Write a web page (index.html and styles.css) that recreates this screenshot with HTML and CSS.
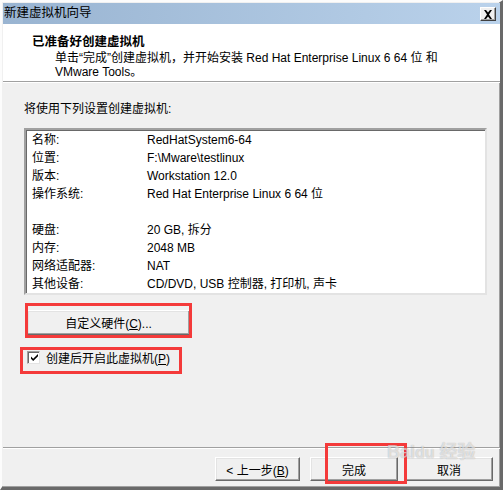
FILE: index.html
```html
<!DOCTYPE html>
<html lang="zh-CN">
<head>
<meta charset="utf-8">
<title>新建虚拟机向导</title>
<link rel="stylesheet" href="styles.css">
</head>
<body>
<div class="window">
  <div class="titlebar">
    <span class="title">新建虚拟机向导</span>
    <span class="close"><svg width="10" height="9" viewBox="0 0 10 9"><path d="M1 0h2l2 2.6L7 0h2L6 4.5 9 9H7L5 6.4 3 9H1l3-4.5z" fill="#000"/></svg></span>
  </div>
  <div class="header">
    <h1>已准备好创建虚拟机</h1>
    <p>单击“完成”创建虚拟机，并开始安装 Red Hat Enterprise Linux 6 64 位 和<br>VMware Tools。</p>
  </div>
  <div class="content">
    <p class="intro">将使用下列设置创建虚拟机:</p>
    <div class="listbox">
      <div class="row"><span class="k">名称:</span><span>RedHatSystem6-64</span></div>
      <div class="row"><span class="k">位置:</span><span>F:\Mware\testlinux</span></div>
      <div class="row"><span class="k">版本:</span><span>Workstation 12.0</span></div>
      <div class="row"><span class="k">操作系统:</span><span>Red Hat Enterprise Linux 6 64 位</span></div>
      <div class="row"></div>
      <div class="row"><span class="k">硬盘:</span><span>20 GB, 拆分</span></div>
      <div class="row"><span class="k">内存:</span><span>2048 MB</span></div>
      <div class="row"><span class="k">网络适配器:</span><span>NAT</span></div>
      <div class="row"><span class="k">其他设备:</span><span>CD/DVD, USB 控制器, 打印机, 声卡</span></div>
    </div>
    <button class="btn hw">自定义硬件(<u>C</u>)...</button>
    <label class="check"><span class="box"><svg width="9" height="9" viewBox="0 0 9 9"><path d="M1 3.5l2.2 2.2L8 1v2.3L3.2 8 1 5.8z" fill="#000"/></svg></span><span class="ctext">创建后开启此虚拟机(<u>P</u>)</span></label>
  </div>
  <div class="footer">
    <button class="btn back">&lt; 上一步(<u>B</u>)</button>
    <button class="btn finish">完成</button>
    <button class="btn cancel">取消</button>
  </div>
  <div class="mark m1"></div>
  <div class="mark m2"></div>
  <div class="mark m3"></div>
  <div class="watermark">Bai<b>du</b> 经验</div>
</div>
</body>
</html>
```

FILE: styles.css
```css
* { box-sizing: border-box; }
html, body { margin: 0; padding: 0; }
body {
  font-family: "Liberation Sans", "Noto Sans CJK SC", sans-serif;
  font-size: 12px;
  color: #000;
  background: #f0f0f0;
}
.window {
  position: relative;
  width: 503px;
  height: 490px;
  background: #f0f0f0;
  border-style: solid;
  border-width: 2px 3px 3px 2px;
  border-color: #fcfcfc #696969 #696969 #fcfcfc;
  box-shadow: inset -1px -1px 0 #a0a0a0;
  padding: 1px 0 0 1px;
  display: flex;
  flex-direction: column;
}
.titlebar {
  height: 21px;
  background: linear-gradient(to right, #99b4d1, #bad2eb);
  display: flex;
  align-items: center;
  justify-content: space-between;
  padding-left: 1px;
}
.title { line-height: 21px; font-size: 12.5px; }
.close {
  width: 16px;
  height: 14px;
  margin-right: 4px;
  margin-top: 1px;
  background: #f0f0f0;
  border: 1px solid;
  border-color: #fff #404040 #404040 #fff;
  box-shadow: inset -1px -1px 0 #a0a0a0;
  display: flex;
  align-items: center;
  justify-content: center;
}
.header {
  height: 58px;
  background: #fff;
  border-bottom: 1px solid #a0a0a0;
  box-shadow: 0 1px 0 #fff;
  padding: 10px 0 0 29px;
}
.header h1 {
  margin: 0;
  font-size: 12.5px;
  font-weight: bold;
  line-height: 16px;
}
.header p {
  margin: 1px 0 0 23px;
  line-height: 14px;
}
.content {
  flex: 1;
  padding: 20px 0 0 21px;
}
.intro {
  margin: 0 0 12px;
  line-height: 14px;
}
.listbox {
  width: 463px;
  height: 167px;
  background: #fff;
  border-style: solid;
  border-width: 2px;
  border-color: #a0a0a0 #e3e3e3 #e3e3e3 #a0a0a0;
  box-shadow: inset 1px 1px 0 #696969;
  padding: 1px 0 0 6px;
}
.row {
  height: 18px;
  line-height: 18px;
  display: flex;
  white-space: nowrap;
}
.row .k { width: 115px; }
.btn {
  font: inherit;
  color: #000;
  background: #f0f0f0;
  border: 1px solid;
  border-color: #fff #696969 #696969 #fff;
  box-shadow: inset -1px -1px 0 #a0a0a0, inset 1px 1px 0 #e3e3e3;
  padding: 0;
  height: 24px;
}
.btn u { text-decoration: underline; }
.hw {
  display: block;
  margin: 15px 0 0 3px;
  width: 163px;
  height: 25px;
}
.check {
  display: flex;
  align-items: center;
  gap: 6px;
  height: 16px;
  margin-top: 14px;
  margin-left: 3px;
}
.ctext { white-space: nowrap; }
.box {
  width: 13px;
  height: 13px;
  background: #fff;
  border: 1px solid;
  border-color: #a0a0a0 #e3e3e3 #e3e3e3 #a0a0a0;
  box-shadow: inset 1px 1px 0 #696969;
  display: flex;
  align-items: center;
  justify-content: center;
  padding: 1px 0 0 1px;
}
.footer {
  height: 40px;
  border-top: 1px solid #a0a0a0;
  box-shadow: inset 0 1px 0 #fff;
  display: flex;
  justify-content: flex-end;
  align-items: flex-start;
  padding: 9px 7px 0 0;
}
.back { width: 85px; }
.finish { width: 88px; margin-left: 10px; }
.cancel { width: 88px; margin-left: 7px; }
.mark {
  position: absolute;
  border: 3px solid #f43a3a;
}
.m1 { left: 23px; top: 301px; width: 167px; height: 35px; }
.m2 { left: 18px; top: 345px; width: 162px; height: 27px; }
.m3 { left: 323px; top: 441px; width: 82px; height: 41px; }
.watermark {
  position: absolute;
  left: 385px;
  top: 440px;
  font-size: 18px;
  font-weight: bold;
  line-height: 20px;
  white-space: nowrap;
  color: rgba(255, 255, 255, 0.6);
  text-shadow: 0 0 1px rgba(0, 0, 0, 0.3);
  pointer-events: none;
}
.watermark b { font-size: 16px; }
```
